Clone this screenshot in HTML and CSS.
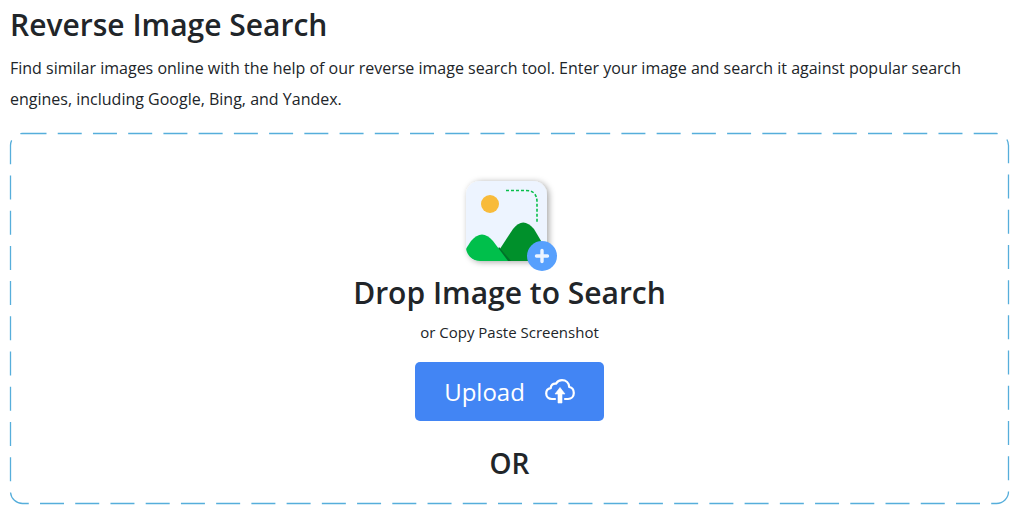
FILE: index.html
```html
<!DOCTYPE html>
<html lang="en">
<head>
<meta charset="utf-8">
<meta name="viewport" content="width=device-width, initial-scale=1">
<title>Reverse Image Search</title>
<link rel="stylesheet" href="styles.css">
</head>
<body>
<main class="page">
  <h1 class="title">Reverse Image Search</h1>
  <p class="intro">Find similar images online with the help of our reverse image search tool. Enter your image and search it against popular search engines, including Google, Bing, and Yandex.</p>
  <section class="dropzone">
    <svg class="outline" aria-hidden="true"><rect x="0.5" y="0.5" width="100%" height="100%" rx="12" fill="none" stroke="#56aedb" stroke-width="1.3" stroke-dasharray="24 11.23"/></svg>
    <svg class="picture" width="104" height="100" viewBox="0 0 104 100" aria-hidden="true">
      <defs>
        <clipPath id="card"><rect x="8" y="6" width="81" height="80" rx="14"/></clipPath>
        <filter id="shade" x="-20%" y="-20%" width="140%" height="140%"><feDropShadow dx="2" dy="1" stdDeviation="3" flood-color="#000" flood-opacity=".35"/></filter>
      </defs>
      <rect x="8" y="6" width="81" height="80" rx="14" fill="#edf4ff" filter="url(#shade)"/>
      <circle cx="32" cy="29" r="9" fill="#f8bb3b"/>
      <path d="M48 15.500H68Q79 15.500 79 27V47" fill="none" stroke="#08bf4b" stroke-width="1.600" stroke-dasharray="3 2"/>
      <g clip-path="url(#card)">
        <path d="M34 86L55 54Q65 41 76 54L95 86Z" fill="#00902b"/>
        <path d="M34 86L41 72L53 86Z" fill="#00712a"/>
        <path d="M0 86L13 66Q24 53 35 66L50 86Z" fill="#00bf4b"/>
      </g>
      <circle cx="84" cy="81" r="15" fill="#57a0fd"/>
      <path d="M84 75.500V86.500M78.500 81H89.500" stroke="#edf4ff" stroke-width="3.400" stroke-linecap="round"/>
    </svg>
    <h2 class="headline">Drop Image to Search</h2>
    <p class="hint">or Copy Paste Screenshot</p>
    <button class="upload" type="button">
      <span>Upload</span>
      <svg width="30" height="25" viewBox="0 0 30 25" fill="none" aria-hidden="true">
        <path d="M10 20H7C3.500 20 1.200 17.500 1.200 14.500C1.200 11.500 3.200 9.600 5.700 9.200C5.700 6.200 8 4.200 11 4.600C12.300 2.400 14.500 1.200 17 1.200C21 1.200 24 4 24.200 8C27 8.500 28.800 11 28.800 14C28.800 17.500 26.300 20 23 20H20" stroke="#fff" stroke-width="2.200" stroke-linecap="round" stroke-linejoin="round"/>
        <path d="M15 8.500L20 15H17V24H13V15H10Z" fill="#fff" stroke="#fff" stroke-width=".6" stroke-linejoin="round"/>
      </svg>
    </button>
    <p class="or">OR</p>
  </section>
</main>
</body>
</html>
```
FILE: styles.css
```css
* { box-sizing: border-box; }
body {
  margin: 0;
  background: #fff;
  color: #212529;
  font-family: "Segoe UI", "Open Sans", sans-serif;
}
.page { padding: 5px 15px 11px 10px; }
.title {
  margin: 0 0 8px;
  font-size: 30px;
  font-weight: 600;
  line-height: 40px;
}
.intro {
  margin: 0 0 18px;
  font-size: 16px;
  line-height: 31px;
}
.dropzone {
  position: relative;
  display: flex;
  flex-direction: column;
  align-items: center;
  padding: 42px 16px 20px;
}
.outline {
  position: absolute;
  inset: 0;
  width: calc(100% - 1px);
  height: 100%;
  overflow: visible;
  pointer-events: none;
}
.picture { display: block; }
.headline {
  margin: 0;
  font-size: 30px;
  font-weight: 600;
  line-height: 36px;
}
.hint {
  margin: 9px 0 18px;
  font-size: 15px;
  line-height: 24px;
}
.upload {
  display: flex;
  align-items: center;
  gap: 20px;
  height: 59px;
  padding: 0 29px;
  border: 0;
  border-radius: 5px;
  background: #4285f4;
  color: #fff;
  font: 400 24px "Segoe UI", "Open Sans", sans-serif;
  cursor: pointer;
}
.or {
  margin: 22px 0 0;
  font-size: 28px;
  font-weight: 600;
  line-height: 40px;
}
```
